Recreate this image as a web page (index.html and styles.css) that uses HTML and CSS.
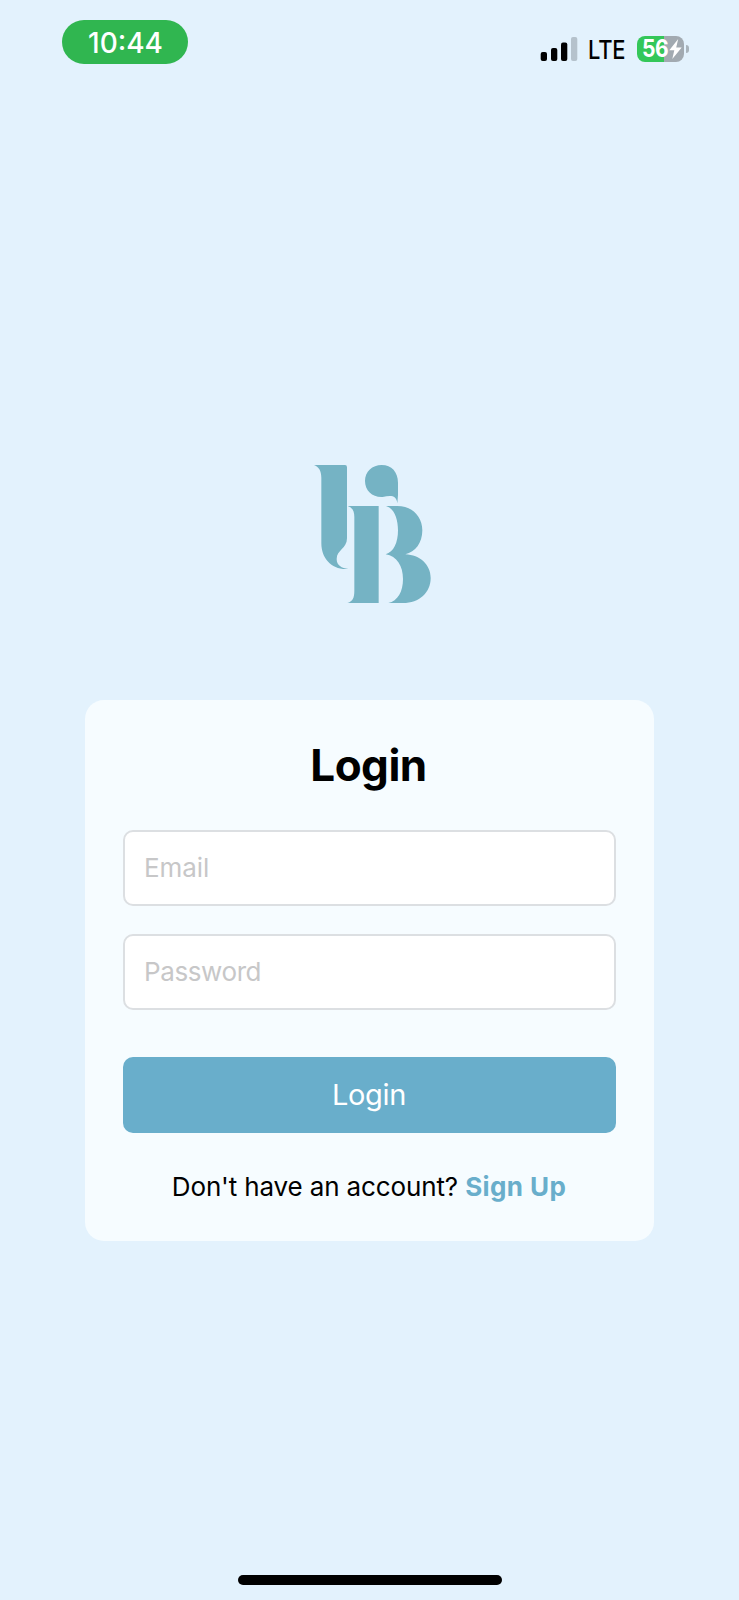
FILE: index.html
```html
<!DOCTYPE html>
<html lang="en">
<head>
<meta charset="utf-8">
<title>Login</title>
<link rel="stylesheet" href="styles.css">
</head>
<body>
<div class="screen">
  <header class="status-bar">
    <div class="clock">10:44</div>
    <div class="indicators">
      <svg class="signal" viewBox="0 0 38 26" aria-hidden="true">
        <rect x="0.7" y="16" width="6.3" height="9" rx="2"/>
        <rect x="11" y="12" width="6.3" height="13" rx="2"/>
        <rect x="21" y="6.5" width="6.3" height="18.5" rx="2"/>
        <rect class="signal-off" x="31" y="1" width="6.3" height="24" rx="2"/>
      </svg>
      <span class="network">LTE</span>
      <div class="battery">
        <div class="battery-body">
          <span class="battery-level">56</span>
          <svg class="bolt" viewBox="0 0 13 20" aria-hidden="true"><path d="M9.2 0 0.3 11.2h5L3.3 20l9.4-11.6H7.2z"/></svg>
        </div>
        <div class="battery-tip"></div>
      </div>
    </div>
  </header>
  <main class="content">
    <svg class="logo" viewBox="0 0 420 480" role="img" aria-label="Logo">
      <path d="M42 30H135Q141 30 141 37V250C141 281 110 285 110 312C110 332 125 339 145 342C96 346 64 311 64 265V68C64 47 56 35 42 30Z"/>
      <path d="M292 145C289 119 271 122 248 126C218 128 195 107 195 78C195 50 217 30 245 30C275 30 294 51 294 83V120Z"/>
      <path d="M143 153H236V444H142C157 440 163 430 163 408V186C163 167 156 157 143 153Z"/>
      <path d="M258 153H292C336 153 367 184 367 226C367 264 346 291 316 298C360 300 392 329 392 369C392 413 358 444 309 444H265C293 438 309 410 309 372C309 333 291 304 257 298C281 291 294 263 294 226C294 189 282 160 258 153Z"/>
    </svg>
    <form class="card">
      <h1 class="title">Login</h1>
      <input class="field" type="email" placeholder="Email">
      <input class="field" type="password" placeholder="Password">
      <button class="submit" type="button">Login</button>
      <p class="signup"><span>Don't have an account?</span> <a class="signup-link">Sign Up</a></p>
    </form>
  </main>
  <div class="home-indicator"></div>
</div>
</body>
</html>
```

FILE: styles.css
```css
* { box-sizing: border-box; }

body {
  margin: 0;
  background: #e3f2fd;
  color: #000;
  font-family: Inter, "Liberation Sans", sans-serif;
}

.screen {
  display: flex;
  flex-direction: column;
  align-items: center;
  height: 1600px;
  overflow: hidden;
}

.status-bar {
  display: flex;
  justify-content: space-between;
  align-items: flex-start;
  width: 100%;
  padding: 20px 50px 0 62px;
}

.clock {
  width: 126px;
  height: 43.5px;
  padding-left: 1px;
  border-radius: 22px;
  background: #30b650;
  color: #fff;
  font-size: 28px;
  font-weight: 500;
  line-height: 46px;
  text-align: center;
}

.indicators {
  display: flex;
  align-items: center;
  height: 26px;
  margin-top: 16px;
}

.signal { width: 38px; height: 26px; }
.signal-off { fill: #b5c2cc; }

.network {
  width: 37px;
  margin: 2px 12px 0 10px;
  font-size: 25.5px;
  font-weight: 500;
  letter-spacing: -0.2px;
  line-height: 26px;
  white-space: nowrap;
  transform: scaleX(0.86);
  transform-origin: left center;
}

.battery {
  display: flex;
  align-items: center;
  gap: 2px;
}

.battery-body {
  display: flex;
  align-items: center;
  width: 47px;
  height: 26px;
  padding-left: 5px;
  border-radius: 8px;
  background: linear-gradient(90deg, #34c759 27px, #a2aab1 27px);
  color: #fff;
}

.battery-level {
  width: 27px;
  font-size: 24px;
  font-weight: 700;
  letter-spacing: -0.5px;
  line-height: 26px;
  transform: scaleX(0.88);
  transform-origin: left center;
}

.bolt { width: 13px; height: 20px; fill: #fff; }

.battery-tip {
  width: 3px;
  height: 8px;
  border-radius: 0 4px 4px 0;
  background: #a9b4bc;
}

.content {
  display: flex;
  flex-direction: column;
  align-items: center;
  padding-top: 391.5px;
}

.logo {
  width: 140px;
  height: 160px;
  fill: #75b3c4;
}

.card {
  display: flex;
  flex-direction: column;
  width: 569px;
  height: 541.5px;
  margin-top: 84.5px;
  padding: 38px;
  border-radius: 19px;
  background: #f6fcff;
}

.title {
  margin: 0 0 38.5px;
  padding-right: 2px;
  font-size: 44px;
  font-weight: 700;
  letter-spacing: -0.5px;
  line-height: 54px;
  text-align: center;
}

.field {
  width: 100%;
  height: 76px;
  margin: 0 0 28px;
  padding: 0 19px 2px;
  border: 2px solid #dcdfe2;
  border-radius: 10px;
  background: #fff;
  font-family: inherit;
  font-size: 26px;
  letter-spacing: -0.4px;
}

.field[type="email"] { letter-spacing: -0.1px; }

.field::placeholder { color: #c7c7c8; opacity: 1; }

.submit {
  height: 76px;
  margin: 19px 0 0;
  padding: 0 1px 2px 0;
  border: 0;
  border-radius: 10px;
  background: #69aecb;
  color: #fff;
  font-family: inherit;
  font-size: 29px;
  letter-spacing: -0.3px;
}

.signup {
  margin: 38px 0 0;
  padding-right: 1px;
  font-size: 26px;
  letter-spacing: -0.14px;
  line-height: 32px;
  text-align: center;
  white-space: nowrap;
}

.signup-link {
  color: #69aecb;
  font-weight: 700;
  letter-spacing: 0.4px;
}

.home-indicator {
  width: 264px;
  height: 10px;
  margin-top: auto;
  margin-bottom: 15px;
  border-radius: 5px;
  background: #000;
}
```
